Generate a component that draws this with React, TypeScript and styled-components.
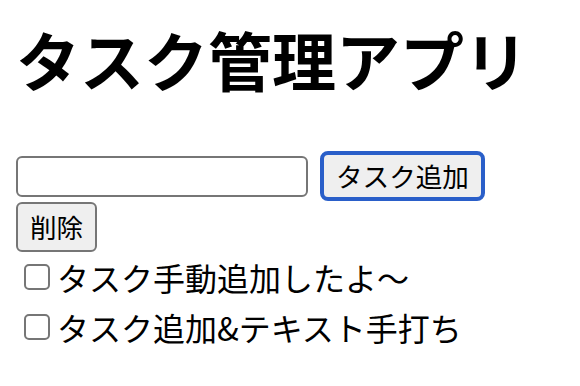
import React, { useState } from 'react';
import styled, { createGlobalStyle } from 'styled-components';

const GlobalStyle = createGlobalStyle`
  html, body {
    margin: 0;
    padding: 0;
    background: #ffffff;
  }
  body {
    font-family: "Noto Sans CJK JP", "Noto Sans", sans-serif;
    color: #000000;
  }
`;

const Page = styled.div`
  padding: 0 16px 16px;
`;

const Title = styled.h1`
  font-size: 64px;
  font-weight: 700;
  line-height: 76px;
  margin: 20px 0 55px;
  letter-spacing: 0;
`;

const FormRow = styled.div`
  display: flex;
  align-items: center;
  gap: 12px;
`;

const TaskInput = styled.input`
  box-sizing: border-box;
  width: 292px;
  height: 41px;
  padding: 2px 4px;
  border: 2px solid #767676;
  border-radius: 6px;
  font-family: inherit;
  font-size: 26px;
  background: #ffffff;
  outline: none;
`;

const Button = styled.button<{ $focused?: boolean }>`
  box-sizing: border-box;
  height: 50px;
  padding: 0 12px;
  font-family: inherit;
  font-size: 26.6px;
  line-height: 1;
  color: #000000;
  background: #efefef;
  border: ${p => (p.$focused ? '4px solid #2a5fc9' : '2px solid #767676')};
  border-radius: ${p => (p.$focused ? '8px' : '6px')};
  cursor: pointer;
`;

const DeleteRow = styled.div`
  margin-top: 1px;
  line-height: 0;
`;

const TaskList = styled.div`
  display: flex;
  flex-direction: column;
  margin-top: 0;
`;

const TaskRow = styled.label`
  display: flex;
  align-items: center;
  height: 50px;
  font-size: 32px;
`;

const Check = styled.input`
  appearance: none;
  box-sizing: border-box;
  width: 26px;
  height: 26px;
  margin: 0 7px 0 8px;
  border: 2px solid #767676;
  border-radius: 5px;
  background: #ffffff;
`;

interface Task {
  id: number;
  title: string;
  done: boolean;
}

const App: React.FC = () => {
  const [text, setText] = useState('');
  const [tasks, setTasks] = useState<Task[]>([
    { id: 1, title: 'タスク手動追加したよ〜', done: false },
    { id: 2, title: 'タスク追加&テキスト手打ち', done: false },
  ]);

  const addTask = () => {
    if (!text) return;
    setTasks([...tasks, { id: Date.now(), title: text, done: false }]);
    setText('');
  };

  const removeDone = () => setTasks(tasks.filter(t => !t.done));

  const toggle = (id: number) =>
    setTasks(tasks.map(t => (t.id === id ? { ...t, done: !t.done } : t)));

  return (
    <>
      <GlobalStyle />
      <Page>
        <Title>タスク管理アプリ</Title>
        <FormRow>
          <TaskInput value={text} onChange={e => setText(e.target.value)} />
          <Button $focused onClick={addTask}>タスク追加</Button>
        </FormRow>
        <DeleteRow>
          <Button onClick={removeDone}>削除</Button>
        </DeleteRow>
        <TaskList>
          {tasks.map(task => (
            <TaskRow key={task.id}>
              <Check type="checkbox" checked={task.done} onChange={() => toggle(task.id)} />
              {task.title}
            </TaskRow>
          ))}
        </TaskList>
      </Page>
    </>
  );
};

export default App;
